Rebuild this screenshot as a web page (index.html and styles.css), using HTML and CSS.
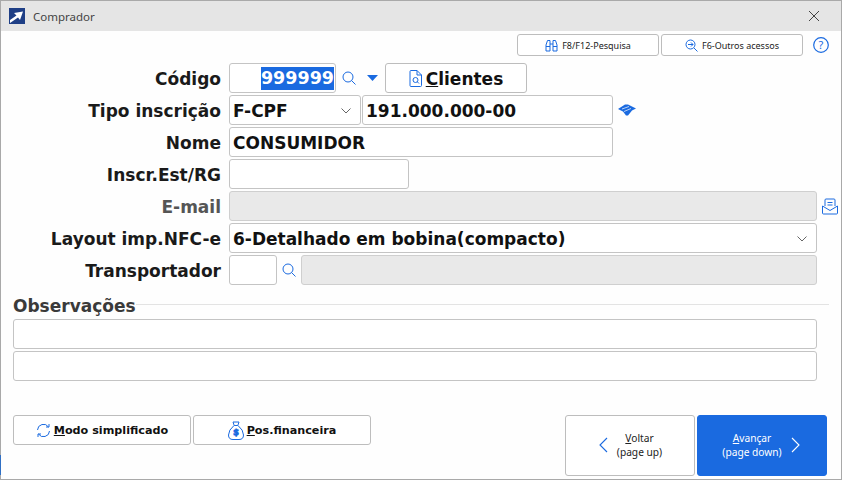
FILE: index.html
```html
<!DOCTYPE html>
<html lang="pt-BR">
<head>
<meta charset="utf-8">
<title>Comprador</title>
<link rel="stylesheet" href="styles.css">
</head>
<body>
<div class="window">
  <span class="edge-sliver"></span>
  <header class="titlebar">
    <svg class="app-icon" width="16" height="16" viewBox="0 0 16 16"><rect width="16" height="16" fill="#1f3f86"/><path d="M1 15 L9 9.500 L11 12 L14 3.500 L5 5 L7.500 7.500 L1 12 Z" fill="#fff"/></svg>
    <span class="title">Comprador</span>
    <svg class="close" width="12" height="12" viewBox="0 0 12 12"><path d="M1 1 L11 11 M11 1 L1 11" stroke="#444" stroke-width="1" fill="none"/></svg>
  </header>
  <div class="toolbar">
    <button class="btn tool">
      <svg width="13" height="13" viewBox="0 0 13 13" fill="none" stroke="#1a6ae0"><path d="M1 12 V6 L2.500 1.500 H5 V12 Z M12 12 V6 L10.500 1.500 H8 V12 Z M5 5 H8 M1 7.500 H5 M8 7.500 H12"/></svg>
      F8/F12-Pesquisa
    </button>
    <button class="btn tool">
      <svg width="13" height="13" viewBox="0 0 13 13" fill="none" stroke="#1a6ae0"><circle cx="5.500" cy="5.500" r="4.500"/><path d="M9 9 L12.500 12.500 M3 5.500 H8 M6 3.500 L8 5.500 L6 7.500"/></svg>
      F6-Outros acessos
    </button>
    <svg class="help" width="16" height="16" viewBox="0 0 16 16"><circle cx="8" cy="8" r="7.300" fill="none" stroke="#1a6ae0" stroke-width="1.200"/><text x="8" y="12" text-anchor="middle" class="help-mark">?</text></svg>
  </div>
  <form class="form">
    <div class="row">
      <label class="label">Código</label>
      <div class="field code"><span class="selected">999999</span></div>
      <svg class="ico-search" width="14" height="14" viewBox="0 0 14 14" fill="none" stroke="#1a6ae0"><circle cx="6" cy="6" r="5"/><path d="M9.500 9.500 L13.500 13.500"/></svg>
      <svg class="ico-drop" width="11" height="6" viewBox="0 0 11 6"><path d="M0 0 H11 L5.500 6 Z" fill="#1a6ae0"/></svg>
      <button type="button" class="btn clientes">
        <svg width="13" height="17" viewBox="0 0 13 17" fill="none" stroke="#1a6ae0"><path d="M1 1.500 Q1 .5 2 .5 H8 L12.500 5 V15.500 Q12.500 16.500 11.500 16.500 H2 Q1 16.500 1 15.500 Z M8 .5 V5 H12.500"/><circle cx="6.500" cy="10" r="2.500"/><path d="M8.300 11.800 L10 13.500"/></svg>
        <span><u>C</u>lientes</span>
      </button>
    </div>
    <div class="row">
      <label class="label">Tipo inscrição</label>
      <div class="field select type">F-CPF<svg class="chev" width="10" height="6" viewBox="0 0 10 6"><path d="M.5 .5 L5 5 L9.500 .5" fill="none" stroke="#666"/></svg></div>
      <div class="field doc">191.000.000-00</div>
      <svg class="ico-rf" width="18" height="12" viewBox="0 0 18 12"><path d="M0 5 L7 .5 H10 L18 4.500 L14 6.500 L10 11.500 L8 11.500 L5 7.500 Z" fill="#1a6ae0"/><path d="M4 5 L11 2.500 M6 7.500 L13 4.500" stroke="#fff" stroke-width=".7"/></svg>
    </div>
    <div class="row">
      <label class="label">Nome</label>
      <div class="field name">CONSUMIDOR</div>
    </div>
    <div class="row">
      <label class="label">Inscr.Est/RG</label>
      <div class="field rg"></div>
    </div>
    <div class="row">
      <label class="label muted">E-mail</label>
      <div class="field wide disabled"></div>
      <svg class="ico-mail" width="16" height="17" viewBox="0 0 16 17" fill="none" stroke="#1a6ae0"><path d="M3 8 V2 Q3 1 4 1 H12 Q13 1 13 2 V8 M5.500 4.500 H10.500 M5.500 7 H10.500 M.5 8 V15 Q.5 16 1.500 16 H14.500 Q15.500 16 15.500 15 V8 L8 12.500 Z"/></svg>
    </div>
    <div class="row">
      <label class="label">Layout imp.NFC-e</label>
      <div class="field select wide">6-Detalhado em bobina(compacto)<svg class="chev" width="10" height="6" viewBox="0 0 10 6"><path d="M.5 .5 L5 5 L9.500 .5" fill="none" stroke="#666"/></svg></div>
    </div>
    <div class="row">
      <label class="label">Transportador</label>
      <div class="field carrier"></div>
      <svg class="ico-search2" width="14" height="14" viewBox="0 0 14 14" fill="none" stroke="#1a6ae0"><circle cx="6" cy="6" r="5"/><path d="M9.500 9.500 L13.500 13.500"/></svg>
      <div class="field carrier-name disabled"></div>
    </div>
    <fieldset class="obs">
      <div class="obs-head"><span class="obs-title">Observações</span><span class="obs-line"></span></div>
      <div class="field obs-field"></div>
      <div class="field obs-field"></div>
    </fieldset>
  </form>
  <footer class="footer">
    <button class="btn foot">
      <svg width="15" height="15" viewBox="0 0 15 15" fill="none" stroke="#1a6ae0"><path d="M1.500 7 A6 6 0 0 1 12.500 4 M13.500 8 A6 6 0 0 1 2.500 11 M10 4 H13 V1 M5 11 H2 V14"/></svg>
      <span><u>M</u>odo simplificado</span>
    </button>
    <button class="btn foot">
      <svg width="16" height="19" viewBox="0 0 16 19" fill="none" stroke="#1a6ae0"><path d="M5 1 H11 L9.800 4.500 H6.200 Z M6 4.500 Q.5 9 .5 14 Q.5 18.500 5 18.500 H11 Q15.500 18.500 15.500 14 Q15.500 9 10 4.500"/><text x="8" y="14.500" text-anchor="middle" class="dollar">$</text></svg>
      <span><u>P</u>os.financeira</span>
    </button>
    <div class="spacer"></div>
    <button class="btn nav back">
      <svg width="9" height="16" viewBox="0 0 9 16"><path d="M8 1 L1 8 L8 15" fill="none" stroke="#1a6ae0" stroke-width="1.100"/></svg>
      <span class="nav-text"><u>V</u>oltar<br>(page up)</span>
    </button>
    <button class="btn nav next">
      <span class="nav-text"><u>A</u>vançar<br>(page down)</span>
      <svg width="9" height="16" viewBox="0 0 9 16"><path d="M1 1 L8 8 L1 15" fill="none" stroke="#fff" stroke-width="1.100"/></svg>
    </button>
  </footer>
</div>
</body>
</html>
```
FILE: styles.css
```css
* { box-sizing: border-box; }
html, body { margin: 0; background: #fff; }
body { width: 856px; height: 487px; overflow: hidden; font-family: "DejaVu Sans", sans-serif; }
.window { position: relative; width: 842px; height: 480px; border: 1px solid #a9a9a9; background: #fefefe; display: flex; flex-direction: column; }
.edge-sliver { position: absolute; left: -1px; top: 454px; width: 1px; height: 20px; background: #2f6fc4; }
.titlebar { height: 30px; flex: none; background: #e5e5e5; display: flex; align-items: center; padding: 0 21px 0 8px; }
.title { margin-left: 8px; font: 11.500px "Noto Sans", sans-serif; color: #444; flex: 1; }
.toolbar { height: 24px; margin-top: 2px; flex: none; display: flex; align-items: center; padding-left: 516px; gap: 2px; }
.btn { background: #fff; border: 1px solid #bdbdbd; border-radius: 3px; font-family: inherit; color: #111; display: flex; align-items: center; justify-content: center; padding: 0; }
.tool { width: 142px; height: 22px; font: 9px "Noto Sans", sans-serif; gap: 4px; color: #222; }
.help { margin-left: 8px; }
.help-mark { font: 11px "Noto Sans", sans-serif; fill: #1a6ae0; }
.form { display: flex; flex-direction: column; gap: 2px; padding-top: 6px; flex: none; }
.row { display: flex; align-items: center; height: 30px; }
.label { width: 220px; text-align: right; font-size: 17px; font-weight: 700; color: #1a1a1a; flex: none; padding-top: 1px; }
.label.muted { color: #555; }
.field { height: 30px; border: 1px solid #c4c4c4; border-radius: 3px; background: #fff; font-size: 17px; font-weight: 700; color: #111; display: flex; align-items: center; padding: 1px 3px 0; flex: none; margin-left: 8px; }
.code { width: 107px; justify-content: flex-end; padding-right: 1px; padding-top: 0; }
.selected { background: #1a6ae0; color: #fff; line-height: 23px; font-size: 17.500px; }
.ico-search { margin-left: 6px; }
.ico-drop { margin-left: 11px; }
.clientes { width: 142px; height: 30px; margin-left: 7px; font-size: 17px; font-weight: 700; gap: 4px; padding-top: 1px; }
.select { justify-content: space-between; padding-right: 9px; }
.type { width: 132px; }
.doc { width: 251px; margin-left: 1px; }
.ico-rf { margin-left: 5px; }
.name { width: 384px; }
.rg { width: 180px; }
.wide { width: 588px; }
.disabled { background: #e9e9e9; border-color: #cfcfcf; }
.ico-mail { margin-left: 5px; }
.carrier { width: 48px; }
.ico-search2 { margin-left: 5px; }
.carrier-name { width: 516px; margin-left: 5px; }
.obs { border: 0; margin: 0; padding: 0 0 0 12px; min-width: 0; display: flex; flex-direction: column; gap: 2px; }
.obs-head { height: 30px; display: flex; align-items: center; padding-top: 7px; }
.obs-title { font-size: 17px; font-weight: 700; color: #3a3a3a; }
.obs-line { flex: 1; height: 1px; background: #e3e3e3; margin: -3px 12px 0 0; }
.obs-field { width: 804px; margin-left: 0; }
.footer { display: flex; align-items: flex-start; padding: 34px 14px 0 12px; gap: 2px; }
.foot { width: 178px; height: 30px; font-size: 11.200px; font-weight: 700; gap: 3px; }
.spacer { flex: 1; }
.nav { width: 130px; height: 61px; font: 10.200px/14px "Noto Sans", sans-serif; color: #222; padding-bottom: 2px; }
.nav-text { text-align: center; }
.back { gap: 9px; padding-left: 1px; }
.next { background: #1a6ae0; border-color: #1a6ae0; color: #fff; gap: 9px; padding-right: 2px; }
.dollar { font: 700 9px "Noto Sans", sans-serif; fill: #1a6ae0; }
```
